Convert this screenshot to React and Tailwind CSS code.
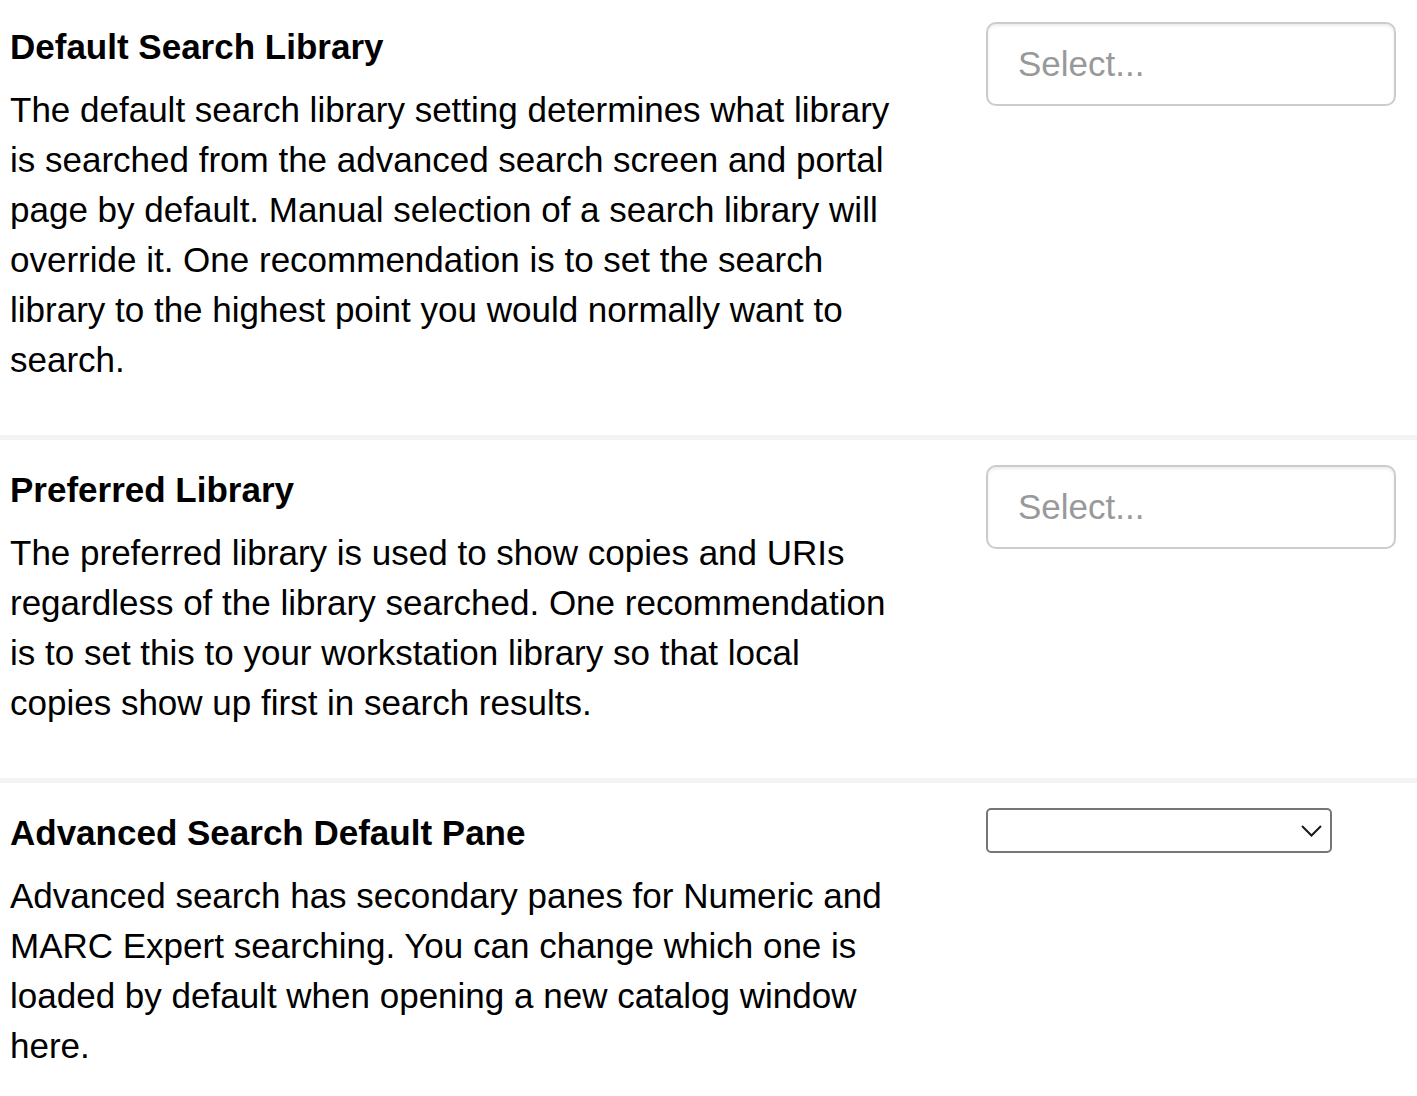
import { useState } from 'react';

const sections = [
  {
    title: 'Default Search Library',
    desc: 'The default search library setting determines what library is searched from the advanced search screen and portal page by default. Manual selection of a search library will override it. One recommendation is to set the search library to the highest point you would normally want to search.',
    control: 'combo',
  },
  {
    title: 'Preferred Library',
    desc: 'The preferred library is used to show copies and URIs regardless of the library searched. One recommendation is to set this to your workstation library so that local copies show up first in search results.',
    control: 'combo',
  },
  {
    title: 'Advanced Search Default Pane',
    desc: 'Advanced search has secondary panes for Numeric and MARC Expert searching. You can change which one is loaded by default when opening a new catalog window here.',
    control: 'select',
  },
];

function LibraryCombo() {
  return (
    <div className="w-[410px] h-[84px] border-[2px] border-[#cccccc] rounded-[10px] bg-white shadow-[inset_0_2px_3px_rgba(0,0,0,0.075)] flex items-center pl-[30px]">
      <span className="text-[35px] leading-[50px] text-[#999999]">Select...</span>
    </div>
  );
}

function PaneSelect() {
  const [value, setValue] = useState('');
  return (
    <div className="relative w-[346px] h-[45px]">
      <select
        value={value}
        onChange={(e) => setValue(e.target.value)}
        className="appearance-none w-full h-full border-[2px] border-[#767676] rounded-[5px] bg-white outline-none"
      >
        <option value=""></option>
        <option value="numeric">Numeric</option>
        <option value="expert">MARC Expert</option>
      </select>
      {/* chevron */}
      <svg
        className="absolute right-[10px] top-[17px] pointer-events-none"
        width="21"
        height="12"
        viewBox="0 0 21 12"
        fill="none"
      >
        <polyline points="1,1 10.5,10.5 20,1" stroke="#1a1a1a" strokeWidth="2" />
      </svg>
    </div>
  );
}

export default function App() {
  return (
    <div className="bg-white min-h-screen font-['Liberation_Sans',Arial,sans-serif] text-black -mt-[3px]">
      {sections.map((s, i) => (
        <div key={i}>
          {i > 0 && <div className="h-[5px] bg-[#f3f3f3]" />}
          <div className="flex pt-[25px] pb-[50px]">
            <div className="w-[986px] pl-[10px] pr-[86px]">
              <div className="text-[35px] leading-[50px] font-bold">{s.title}</div>
              <div className="mt-[13px] text-[35px] leading-[50px]">{s.desc}</div>
            </div>
            <div className="flex-1">
              {s.control === 'combo' ? <LibraryCombo /> : <PaneSelect />}
            </div>
          </div>
        </div>
      ))}
    </div>
  );
}
